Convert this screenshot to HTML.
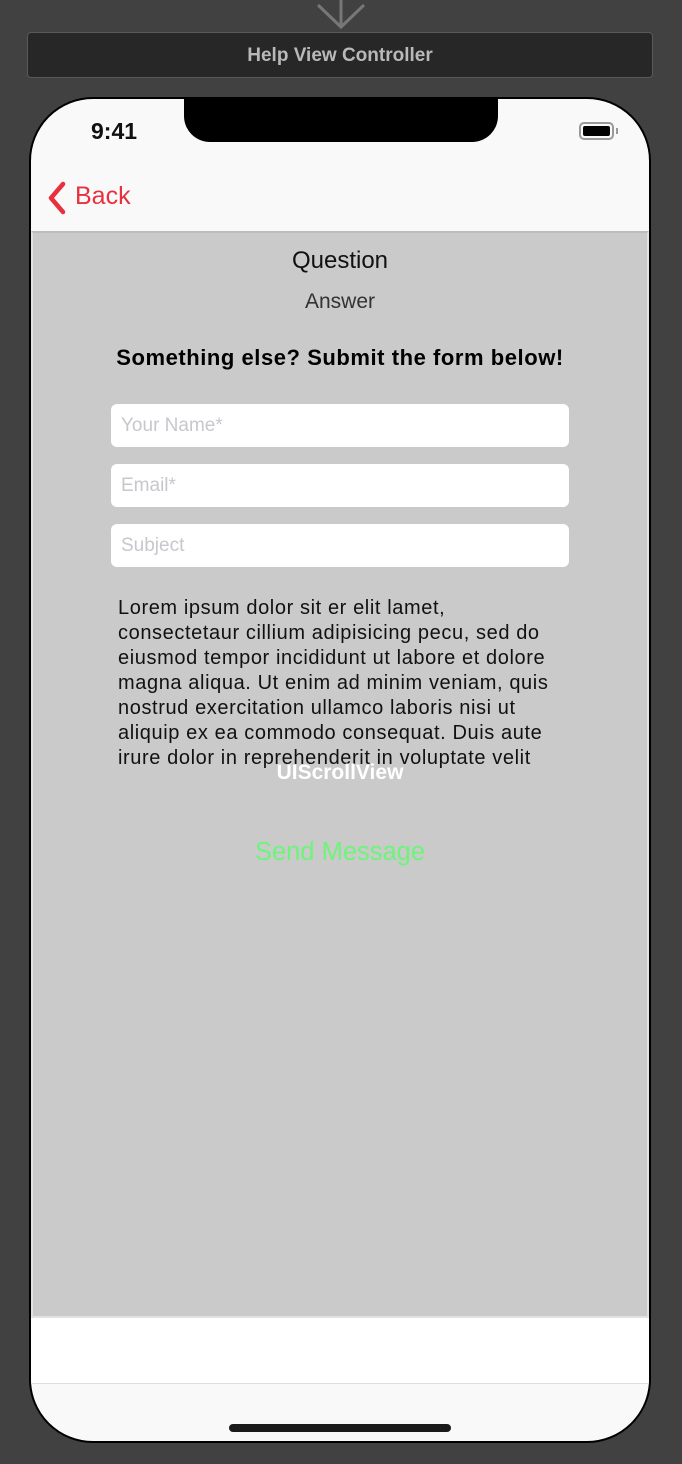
<!DOCTYPE html>
<html><head><meta charset="utf-8"><style>
*{margin:0;padding:0;box-sizing:border-box}
body{width:682px;height:1464px;background:#414141;position:relative;overflow:hidden;font-family:"Liberation Sans",sans-serif}
.abs{position:absolute}
.title{left:27px;top:32px;width:626px;height:46px;background:#272727;border:1px solid #5a5a5a;border-radius:4px;color:#b9b9b9;font-weight:bold;font-size:19px;text-align:center;line-height:46px}
.phone{left:29px;top:97px;width:622px;height:1346px;background:#f9f9f9;border:2px solid #000;border-radius:64px;overflow:hidden}
.notch{left:153px;top:-2px;width:314px;height:45px;background:#000;border-radius:0 0 26px 26px}
.scroll{left:0;top:132px;width:618px;height:1087px;background:#cacaca;border:2px solid #e2e2e2;border-top-color:#bdbdbd}
.white{left:0;top:1219px;width:618px;height:66px;background:#fff;border-bottom:1px solid #ddd}
.field{left:78px;width:458px;height:43px;background:#fff;border-radius:6px;color:#c7c7cd;font-size:19px;line-height:43px;padding-left:10px}
</style></head><body>
<svg class="abs" style="left:314px;top:0" width="54" height="30"><path d="M27 0V27M4 5L27 27L50 5" stroke="#777" stroke-width="3" fill="none"/></svg>
<div class="abs title">Help View Controller</div>
<div class="abs phone">
  <div class="abs notch"></div>
  <div class="abs" style="left:60px;top:19px;font-size:23px;font-weight:bold;color:#111">9:41</div>
  <div class="abs" style="left:548px;top:23px;width:35px;height:18px;border:2px solid #999;border-radius:5px;padding:2px"><div style="width:100%;height:100%;background:#000;border-radius:2px"></div></div>
  <div class="abs" style="left:585px;top:29px;width:2px;height:6px;background:#999"></div>
  <svg class="abs" style="left:16px;top:82px" width="20" height="34"><path d="M16 3L4 17L16 31" stroke="#e8313f" stroke-width="4.5" fill="none" stroke-linecap="round" stroke-linejoin="round"/></svg>
  <div class="abs" style="left:44px;top:83px;font-size:25px;color:#e8313f">Back</div>
  <div class="abs scroll">
    <div class="abs" style="left:0;width:614px;top:14px;text-align:center;font-size:24px;color:#111">Question</div>
    <div class="abs" style="left:0;width:614px;top:57px;text-align:center;font-size:21px;color:#333">Answer</div>
    <div class="abs" style="left:0;width:614px;top:112px;text-align:center;font-size:22px;font-weight:bold;color:#000;letter-spacing:0.55px">Something else? Submit the form below!</div>
    <div class="abs field" style="top:171px">Your Name*</div>
    <div class="abs field" style="top:231px">Email*</div>
    <div class="abs field" style="top:291px">Subject</div>
    <div class="abs" style="left:85px;top:363px;font-size:20px;line-height:25px;color:#111;white-space:nowrap;letter-spacing:0.6px">Lorem ipsum dolor sit er elit lamet,<br>consectetaur cillium adipisicing pecu, sed do<br>eiusmod tempor incididunt ut labore et dolore<br>magna aliqua. Ut enim ad minim veniam, quis<br>nostrud exercitation ullamco laboris nisi ut<br>aliquip ex ea commodo consequat. Duis aute<br>irure dolor in reprehenderit in voluptate velit</div>
    <div class="abs" style="left:0;width:614px;top:528px;text-align:center;font-size:21px;font-weight:bold;color:#fff">UIScrollView</div>
    <div class="abs" style="left:0;width:614px;top:605px;text-align:center;font-size:25.5px;color:#6ef47a">Send Message</div>
  </div>
  <div class="abs white"></div>
  <div class="abs" style="left:198px;top:1325px;width:222px;height:8px;background:#1a1a1a;border-radius:4px"></div>
</div>
</body></html>
